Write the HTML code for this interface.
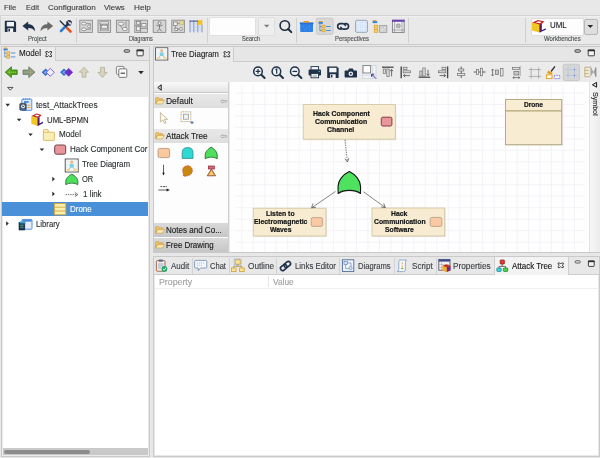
<!DOCTYPE html>
<html><head><meta charset="utf-8"><title>Modelio - Attack Tree</title>
<style>
html,body{margin:0;padding:0;}
body{width:600px;height:458px;background:#e8e8e8;position:relative;overflow:hidden;font-family:"Liberation Sans",sans-serif;font-size:8.4px;color:#2a2e30;}
.a{position:absolute;box-sizing:border-box;}
.t{position:absolute;white-space:nowrap;line-height:10px;transform-origin:0 0;-webkit-text-stroke:0.12px currentColor;}
svg{position:absolute;overflow:visible;left:0;top:0;}
</style></head><body><div id="root" style="position:absolute;left:0;top:0;width:600px;height:458px;will-change:transform;">

<div class="t" style="left:4.20px;top:2.69px;font-size:8.1px;color:#3a3d40;transform:scaleX(0.9432);">File</div>
<div class="t" style="left:25.50px;top:2.69px;font-size:8.1px;color:#3a3d40;transform:scaleX(0.9304);">Edit</div>
<div class="t" style="left:47.50px;top:2.69px;font-size:8.1px;color:#3a3d40;transform:scaleX(0.9918);">Configuration</div>
<div class="t" style="left:104.00px;top:2.69px;font-size:8.1px;color:#3a3d40;transform:scaleX(0.9690);">Views</div>
<div class="t" style="left:134.10px;top:2.69px;font-size:8.1px;color:#3a3d40;transform:scaleX(1.0093);">Help</div>
<div class="a" style="left:0;top:15px;width:600px;height:30px;border-top:1px solid #d4d4d4;border-bottom:1px solid #cbcbcb;background:#e9e9e9;"></div>
<div class="a" style="left:0;top:16px;width:600px;height:1px;background:#f0f0f0;"></div>
<div class="a" style="left:0;top:16px;width:1px;height:28px;background:#d4d4d4;"></div>
<div class="a" style="left:75.5px;top:18px;width:1px;height:25px;background:#d0d0d0;"></div>
<div class="a" style="left:206.5px;top:18px;width:1px;height:25px;background:#d0d0d0;"></div>
<div class="a" style="left:295.5px;top:18px;width:1px;height:25px;background:#d0d0d0;"></div>
<div class="a" style="left:408px;top:18px;width:1px;height:25px;background:#d0d0d0;"></div>
<div class="a" style="left:524.5px;top:18px;width:1px;height:25px;background:#d0d0d0;"></div>
<div class="t" style="left:28.00px;top:34.28px;font-size:6.4px;color:#4a4e50;transform:scaleX(0.9395);">Project</div>
<div class="t" style="left:129.00px;top:34.28px;font-size:6.4px;color:#4a4e50;transform:scaleX(0.8689);">Diagrams</div>
<div class="t" style="left:242.00px;top:34.28px;font-size:6.4px;color:#4a4e50;transform:scaleX(0.8872);">Search</div>
<div class="t" style="left:334.70px;top:34.28px;font-size:6.4px;color:#4a4e50;transform:scaleX(0.9279);">Perspectives</div>
<div class="t" style="left:544.00px;top:34.28px;font-size:6.4px;color:#4a4e50;transform:scaleX(0.9408);">Workbenches</div>
<div class="a" style="left:208.5px;top:17px;width:47.5px;height:18.5px;background:#fdfdfd;border:1px solid #e0e0e0;border-radius:2px;"></div>
<div class="a" style="left:257.5px;top:17px;width:17.5px;height:18.5px;background:#eeeeee;border:1px solid #dedede;border-radius:1px;"></div>
<div class="a" style="left:530.5px;top:17.5px;width:53px;height:18px;background:#fdfdfd;border:1px solid #dcdcdc;border-radius:2px;"></div>
<div class="a" style="left:583.5px;top:18.5px;width:14.5px;height:16px;background:#dedede;border:1px solid #b8b8b8;border-radius:2px;"></div>
<div class="t" style="left:550.00px;top:20.56px;font-size:8.2px;color:#1c1c1c;transform:scaleX(0.9652);">UML</div>
<div class="a" style="left:1px;top:45.5px;width:148.5px;height:411px;border:1px solid #c9c9c9;background:#ebebeb;"></div>
<div class="a" style="left:55px;top:46.5px;width:93.5px;height:14.5px;background:#e6e6e6;border-bottom:1px solid #cdcdcd;border-left:1px solid #cdcdcd;"></div>
<div class="t" style="left:18.70px;top:48.49px;font-size:8.4px;color:#1c1c1c;transform:scaleX(0.9611);">Model</div>
<div class="a" style="left:2.5px;top:97px;width:145px;height:351px;background:#ffffff;"></div>
<div class="a" style="left:2.5px;top:447.8px;width:145px;height:7.7px;background:#c9c9c9;"></div>
<div class="a" style="left:4px;top:449.8px;width:85.5px;height:4px;background:#8c8c8c;border-radius:2px;"></div>
<div class="a" style="left:2px;top:202px;width:145.5px;height:14.3px;background:#4a90d9;"></div>
<div class="t" style="left:35.60px;top:99.79px;font-size:8.4px;color:#2a2e30;transform:scaleX(0.9840);">test_AttackTrees</div>
<div class="t" style="left:47.00px;top:114.64px;font-size:8.4px;color:#2a2e30;transform:scaleX(0.9305);">UML-BPMN</div>
<div class="t" style="left:59.00px;top:129.49px;font-size:8.4px;color:#2a2e30;transform:scaleX(0.9611);">Model</div>
<div class="t" style="left:70.00px;top:144.34px;font-size:8.4px;color:#2a2e30;transform:scaleX(0.9608);">Hack Component Cor</div>
<div class="t" style="left:81.75px;top:159.19px;font-size:8.4px;color:#2a2e30;transform:scaleX(0.9455);">Tree Diagram</div>
<div class="t" style="left:81.75px;top:174.04px;font-size:8.4px;color:#2a2e30;transform:scaleX(0.8929);">OR</div>
<div class="t" style="left:82.50px;top:188.89px;font-size:8.4px;color:#2a2e30;transform:scaleX(0.9514);">1 link</div>
<div class="t" style="left:70.00px;top:203.74px;font-size:8.4px;color:#ffffff;transform:scaleX(0.9480);">Drone</div>
<div class="t" style="left:35.75px;top:218.59px;font-size:8.4px;color:#2a2e30;transform:scaleX(0.9255);">Library</div>
<div class="a" style="left:147.5px;top:140px;width:1px;height:16px;background:#ebebeb;"></div>
<div class="a" style="left:148.5px;top:140px;width:1px;height:16px;background:#c9c9c9;"></div>
<div class="a" style="left:149.5px;top:140px;width:3px;height:16px;background:#e8e8e8;"></div>
<div class="a" style="left:152.5px;top:45.5px;width:448px;height:207.5px;border:1px solid #c9c9c9;background:#ebebeb;"></div>
<div class="a" style="left:233px;top:46.5px;width:367px;height:15px;background:#e6e6e6;border-bottom:1px solid #cdcdcd;border-left:1px solid #cdcdcd;"></div>
<div class="t" style="left:170.80px;top:48.59px;font-size:8.4px;color:#1c1c1c;transform:scaleX(0.9406);">Tree Diagram</div>
<div class="a" style="left:154px;top:82px;width:75px;height:170px;background:#fdfdfd;border-right:1px solid #cfcfcf;"></div>
<div class="a" style="left:154px;top:82px;width:74px;height:10.5px;background:linear-gradient(#fafafa,#e4e4e4);border-bottom:1px solid #c8c8c8;"></div>
<div class="a" style="left:154px;top:93.5px;width:74px;height:14px;background:linear-gradient(#e8e8e8,#dedede);"></div>
<div class="a" style="left:154px;top:128.6px;width:74px;height:14px;background:linear-gradient(#e8e8e8,#dedede);"></div>
<div class="a" style="left:154px;top:223px;width:74px;height:14.2px;background:linear-gradient(#dadada,#c6c6c6);"></div>
<div class="a" style="left:154px;top:238px;width:74px;height:13.5px;background:linear-gradient(#dadada,#c6c6c6);"></div>
<div class="t" style="left:165.60px;top:95.94px;font-size:9.4px;color:#1c1c1c;transform:scaleX(0.9027);-webkit-text-stroke:0.15px #1c1c1c;">Default</div>
<div class="t" style="left:165.60px;top:130.74px;font-size:9.4px;color:#1c1c1c;transform:scaleX(0.8767);-webkit-text-stroke:0.15px #1c1c1c;">Attack Tree</div>
<div class="t" style="left:166.00px;top:224.74px;font-size:9.4px;color:#1c1c1c;transform:scaleX(0.8572);-webkit-text-stroke:0.15px #1c1c1c;">Notes and Co...</div>
<div class="t" style="left:166.00px;top:239.74px;font-size:9.4px;color:#1c1c1c;transform:scaleX(0.8457);-webkit-text-stroke:0.15px #1c1c1c;">Free Drawing</div>
<div class="a" style="left:229.5px;top:82px;width:359.5px;height:170px;background:#fefefe;"></div>
<div class="a" style="left:589px;top:82px;width:11px;height:170px;background:linear-gradient(90deg,#f6f6f6,#ececec);border-left:1px solid #e2e2e2;"></div>
<div class="t" style="left:600px;top:92.2px;font-size:8px;transform:rotate(90deg) scaleX(0.885);color:#222;">Symbol</div>
<div class="a" style="left:152.5px;top:256px;width:447px;height:200.5px;border:1px solid #c9c9c9;background:#e8e8e8;"></div>
<div class="a" style="left:153.5px;top:274px;width:445px;height:1px;background:#cdcdcd;"></div>
<div class="a" style="left:154.5px;top:275px;width:443.5px;height:180px;background:#ffffff;"></div>
<div class="a" style="left:493.5px;top:257px;width:75px;height:17.5px;background:#f3f3f3;border-left:1px solid #cdcdcd;border-right:1px solid #cdcdcd;"></div>
<div class="a" style="left:192px;top:258px;width:1px;height:15.5px;background:#d2d2d2;"></div>
<div class="a" style="left:228.7px;top:258px;width:1px;height:15.5px;background:#d2d2d2;"></div>
<div class="a" style="left:276px;top:258px;width:1px;height:15.5px;background:#d2d2d2;"></div>
<div class="a" style="left:339.3px;top:258px;width:1px;height:15.5px;background:#d2d2d2;"></div>
<div class="a" style="left:393.5px;top:258px;width:1px;height:15.5px;background:#d2d2d2;"></div>
<div class="a" style="left:435.5px;top:258px;width:1px;height:15.5px;background:#d2d2d2;"></div>
<div class="t" style="left:170.50px;top:260.79px;font-size:8.4px;color:#3a3d40;transform:scaleX(0.9503);">Audit</div>
<div class="t" style="left:210.00px;top:260.79px;font-size:8.4px;color:#3a3d40;transform:scaleX(0.9027);">Chat</div>
<div class="t" style="left:247.50px;top:260.79px;font-size:8.4px;color:#3a3d40;transform:scaleX(0.9839);">Outline</div>
<div class="t" style="left:294.80px;top:260.79px;font-size:8.4px;color:#3a3d40;transform:scaleX(0.9364);">Links Editor</div>
<div class="t" style="left:358.00px;top:260.79px;font-size:8.4px;color:#3a3d40;transform:scaleX(0.9123);">Diagrams</div>
<div class="t" style="left:412.00px;top:260.79px;font-size:8.4px;color:#3a3d40;transform:scaleX(0.9645);">Script</div>
<div class="t" style="left:453.20px;top:260.79px;font-size:8.4px;color:#3a3d40;transform:scaleX(0.9868);">Properties</div>
<div class="t" style="left:512.00px;top:260.79px;font-size:8.4px;color:#111;transform:scaleX(0.9505);">Attack Tree</div>
<div class="t" style="left:158.70px;top:276.59px;font-size:8.4px;color:#a0a0a0;transform:scaleX(1.0488);">Property</div>
<div class="t" style="left:273.00px;top:276.59px;font-size:8.4px;color:#a0a0a0;transform:scaleX(0.9917);">Value</div>
<div class="a" style="left:268px;top:276px;width:1px;height:11px;background:#e6e6e6;"></div>
<div class="a" style="left:154.5px;top:287.5px;width:444px;height:1px;background:#efefef;"></div>
<svg width="600" height="458" viewBox="0 0 600 458">
<path d="M241.80 85V251.5 M253.27 85V251.5 M264.74 85V251.5 M276.21 85V251.5 M287.68 85V251.5 M299.15 85V251.5 M310.62 85V251.5 M322.09 85V251.5 M333.56 85V251.5 M345.03 85V251.5 M356.50 85V251.5 M367.97 85V251.5 M379.44 85V251.5 M390.91 85V251.5 M402.38 85V251.5 M413.85 85V251.5 M425.32 85V251.5 M436.79 85V251.5 M448.26 85V251.5 M459.73 85V251.5 M471.20 85V251.5 M482.67 85V251.5 M494.14 85V251.5 M505.61 85V251.5 M517.08 85V251.5 M528.55 85V251.5 M540.02 85V251.5 M551.49 85V251.5 M562.96 85V251.5 M574.43 85V251.5 M235 93.00H584.5 M235 104.47H584.5 M235 115.94H584.5 M235 127.41H584.5 M235 138.88H584.5 M235 150.35H584.5 M235 161.82H584.5 M235 173.29H584.5 M235 184.76H584.5 M235 196.23H584.5 M235 207.70H584.5 M235 219.17H584.5 M235 230.64H584.5 M235 242.11H584.5" stroke="#f1eff5" stroke-width="0.8" fill="none"/>
<rect x="304.2" y="105.5" width="92.10000000000002" height="34.69999999999999" fill="#d9d9d9" opacity="0.6"/>
<rect x="303.2" y="104.5" width="92.10000000000002" height="34.69999999999999" fill="#f7ecd1" stroke="#cfc29a" stroke-width="0.8"/>
<rect x="254.2" y="209.2" width="72.80000000000001" height="27.80000000000001" fill="#d9d9d9" opacity="0.6"/>
<rect x="253.2" y="208.2" width="72.80000000000001" height="27.80000000000001" fill="#f7ecd1" stroke="#cfc29a" stroke-width="0.8"/>
<rect x="373" y="209" width="72.69999999999999" height="28" fill="#d9d9d9" opacity="0.6"/>
<rect x="372" y="208" width="72.69999999999999" height="28" fill="#f7ecd1" stroke="#cfc29a" stroke-width="0.8"/>
<rect x="506.4" y="100.3" width="56.3" height="45.2" fill="#cfcfcf" opacity="0.7"/>
<rect x="505.5" y="99.5" width="56.2" height="45.2" fill="#f8ecd2" stroke="#b0a478" stroke-width="0.9"/>
<path d="M505.5 110.8H561.7" stroke="#b0a478" stroke-width="1.2"/>
<rect x="381.3" y="117.2" width="10.6" height="8.8" rx="1.5" fill="#e8959b" stroke="#8c3748" stroke-width="1"/>
<rect x="311.2" y="217.6" width="11.2" height="8.8" rx="1.5" fill="#f8c9a2" stroke="#b59a86" stroke-width="0.8"/>
<rect x="430.2" y="217.4" width="11.6" height="9" rx="1.5" fill="#f8c9a2" stroke="#b59a86" stroke-width="0.8"/>
<path d="M345 139.8L347.4 162" stroke="#444" stroke-width="0.7" stroke-dasharray="1.4 1" fill="none"/>
<path d="M345 158.6L347.4 162L348.9 158.2" stroke="#444" stroke-width="0.7" fill="none"/>
<path d="M335.5 191.5L311.6 207.8" stroke="#555" stroke-width="0.7" fill="none"/>
<path d="M313 203.5L311.6 207.8L316 207.3" stroke="#444" stroke-width="0.7" fill="none"/>
<path d="M363.5 191.8L385.3 207.5" stroke="#555" stroke-width="0.7" fill="none"/>
<path d="M381 207L385.3 207.5L383.7 203.4" stroke="#444" stroke-width="0.7" fill="none"/>
<path d="M349.3 171.5C355.5 174.5 360.6 180.5 360.6 186.8L360.5 193.5C355 189.4 343.6 189.4 338.2 193.5L338 186.8C338 180.5 343 174.5 349.3 171.5Z" fill="#4fe25e" stroke="#141414" stroke-width="1.1" stroke-linejoin="round"/>
</svg>
<div class="t" style="left:312.60px;top:108.77px;font-size:7px;color:#141414;font-weight:bold;transform:scaleX(0.9865);-webkit-text-stroke:0.2px #141414;">Hack Component</div>
<div class="t" style="left:314.91px;top:116.77px;font-size:7px;color:#141414;font-weight:bold;transform:scaleX(0.9865);-webkit-text-stroke:0.2px #141414;">Communication</div>
<div class="t" style="left:327.38px;top:124.77px;font-size:7px;color:#141414;font-weight:bold;transform:scaleX(0.9865);-webkit-text-stroke:0.2px #141414;">Channel</div>
<div class="t" style="left:266.41px;top:209.17px;font-size:7px;color:#141414;font-weight:bold;transform:scaleX(0.9805);-webkit-text-stroke:0.2px #141414;">Listen to</div>
<div class="t" style="left:254.00px;top:217.17px;font-size:7px;color:#141414;font-weight:bold;transform:scaleX(0.9805);-webkit-text-stroke:0.2px #141414;">Electromagnetic</div>
<div class="t" style="left:269.96px;top:225.17px;font-size:7px;color:#141414;font-weight:bold;transform:scaleX(0.9805);-webkit-text-stroke:0.2px #141414;">Waves</div>
<div class="t" style="left:391.42px;top:208.97px;font-size:7px;color:#141414;font-weight:bold;transform:scaleX(0.9757);-webkit-text-stroke:0.2px #141414;">Hack</div>
<div class="t" style="left:373.80px;top:216.97px;font-size:7px;color:#141414;font-weight:bold;transform:scaleX(0.9757);-webkit-text-stroke:0.2px #141414;">Communication</div>
<div class="t" style="left:385.17px;top:224.97px;font-size:7px;color:#141414;font-weight:bold;transform:scaleX(0.9757);-webkit-text-stroke:0.2px #141414;">Software</div>
<div class="t" style="left:524.00px;top:99.87px;font-size:7px;color:#141414;font-weight:bold;transform:scaleX(0.9392);-webkit-text-stroke:0.2px #141414;">Drone</div>
<svg width="600" height="458" viewBox="0 0 600 458">
<g transform="translate(3.2,47.2) scale(0.98)"><path d="M0.3 1.2Q0.3 0.3 1.3 0.3H3.6Q4.4 0.3 4.4 1.2V1.6H0.3Z" fill="#f0a020"/><rect x="0.3" y="1.5" width="4.3" height="1.7" fill="#2f7fe0"/><path d="M1.6 3.2V9.9M1.6 6H3.6M1.6 9.9H3.6" stroke="#3a78c8" stroke-width="0.7" fill="none"/><rect x="3.7" y="4.6" width="3" height="2.7" fill="#f6d060" stroke="#d89a20" stroke-width="0.6"/><rect x="3.7" y="8.5" width="3" height="2.7" fill="#f6d060" stroke="#d89a20" stroke-width="0.6"/><path d="M7.8 5.9H12.4M7.8 9.9H12.4" stroke="#3a88e0" stroke-width="0.9"/></g>
<g transform="translate(45.5,51.2)" fill="#efefef" stroke="#262626" stroke-width="0.9"><path d="M0.4 0.4H2.2L3.2 1.5L4.2 0.4H6V1.9L4.7 2.9L6 3.9V5.4H4.2L3.2 4.3L2.2 5.4H0.4V3.9L1.7 2.9L0.4 1.9Z"/></g>
<rect x="124.2" y="49.8" width="5.4" height="2.4" rx="0.9" fill="#cfcfcf" stroke="#333" stroke-width="0.9"/>
<rect x="137" y="50.0" width="6.2" height="5.8" rx="0.6" fill="#f4f4f4" stroke="#2e2e2e" stroke-width="0.9"/>
<rect x="136.6" y="49.599999999999994" width="7" height="1.7" fill="#2e2e2e"/>
<path d="M5.2 72.2L11.4 66.8V70H17.2V74.4H11.4V77.6Z" fill="#52a51e" stroke="#2f7a12" stroke-width="0.8" stroke-linejoin="round"/>
<path d="M7.6 72.2H16M9.6 70.2V74.2" stroke="#d9d23a" stroke-width="0.7" stroke-dasharray="1.2 0.6"/>
<path d="M35 72.2L28.8 66.8V70H23V74.4H28.8V77.6Z" fill="#8d9a84" stroke="#6c7766" stroke-width="0.8" stroke-linejoin="round"/>
<path d="M24.4 72.2H32.6M30.8 70.2V74.2" stroke="#b5b77e" stroke-width="0.7" stroke-dasharray="1.2 0.6"/>
<path d="M41.7 72.3L45.6 68.5L49.5 72.3L45.6 76.1Z" fill="#2f6fd6"/>
<path d="M43.900000000000006 72.3L45.900000000000006 70.4L47.900000000000006 72.3L45.900000000000006 74.2Z" fill="#7fa8ec"/>
<path d="M50.300000000000004 68.4L54.300000000000004 72.3L50.300000000000004 76.3L46.300000000000004 72.3Z" fill="#eef0fa" stroke="#7a3cc8" stroke-width="0.8"/>
<path d="M60.1 72.3L64.0 68.5L67.9 72.3L64.0 76.1Z" fill="#2f6fd6"/>
<path d="M62.300000000000004 72.3L64.3 70.4L66.3 72.3L64.3 74.2Z" fill="#7fa8ec"/>
<path d="M68.7 68.4L72.7 72.3L68.7 76.3L64.7 72.3Z" fill="#6a2fc4" stroke="#7a3cc8" stroke-width="0.8"/>
<path d="M84 67.2L88.6 72.2H86V77.2H82V72.2H79.4Z" fill="#d9d3bf" stroke="#b5ad94" stroke-width="0.8" stroke-linejoin="round"/>
<path d="M102.5 77.4L107.1 72.4H104.5V67.4H100.5V72.4H97.9Z" fill="#d9d3bf" stroke="#b5ad94" stroke-width="0.8" stroke-linejoin="round"/>
<rect x="116.4" y="66.4" width="7.6" height="8" rx="1" fill="#f6f6f6" stroke="#6c6c6c" stroke-width="0.8"/>
<rect x="118.8" y="68.8" width="8" height="8.6" rx="1" fill="#fafafa" stroke="#5a5a5a" stroke-width="0.8"/>
<path d="M120.6 73.2H125" stroke="#3a3a3a" stroke-width="1.1"/>
<path d="M138.2 71H143.8L141 74.2Z" fill="#2c2c2c"/>
<path d="M7.6 87.4H13L10.3 90.2Z" fill="#f0f0f0" stroke="#2c2c2c" stroke-width="0.8" stroke-linejoin="round"/>
<path d="M5.4 103.8H10.0L7.7 106.39999999999999Z" fill="#2c2c2c"/>
<path d="M16.8 118.7H21.4L19.1 121.3Z" fill="#2c2c2c"/>
<path d="M28.2 133.5H32.8L30.5 136.1Z" fill="#2c2c2c"/>
<path d="M39.6 148.4H44.2L41.9 151.0Z" fill="#2c2c2c"/>
<path d="M52.3 176.8V181.4L54.9 179.10000000000002Z" fill="#2c2c2c"/>
<path d="M52.3 191.6V196.2L54.9 193.9Z" fill="#2c2c2c"/>
<path d="M6.2 221.2V225.79999999999998L8.8 223.5Z" fill="#2c2c2c"/>
<rect x="21.8" y="99" width="10" height="11.4" rx="0.8" fill="#dbe9fb" stroke="#4a8ae0" stroke-width="0.9"/>
<path d="M23.4 98.2V100M25.4 98.2V100M27.4 98.2V100M29.4 98.2V100" stroke="#4a8ae0" stroke-width="0.8"/>
<rect x="24" y="101.2" width="4.6" height="1.6" fill="#2f7fe0"/>
<path d="M27.4 105.2H30.4M27.4 107.6H30.4" stroke="#f0a030" stroke-width="1"/>
<rect x="19.8" y="103.4" width="6.4" height="6.8" rx="0.8" fill="#4a5a70" stroke="#2c3a4c" stroke-width="0.7"/>
<circle cx="23" cy="106.4" r="1.9" fill="#e8eef4"/><path d="M22.4 105.3V107.5L24.2 106.4Z" fill="#2c3c50"/>
<path d="M20.6 109.4H25.4" stroke="#3a7ad0" stroke-width="0.8"/>
<g transform="translate(31.3,113.4) scale(0.84,1.0)"><path d="M0 2.6L7.6 4.2V12.6L0 10.4Z" fill="#f2c81e"/><path d="M0.2 2.6L6 0L12.4 1.6L9.4 4.2L7.6 4.4Z" fill="#c8201c"/><path d="M3.6 2.4L6.4 1.2L9.6 2L8 3.2Z" fill="#fdfdfd"/><path d="M7.6 4.4L9.8 3.8V10.2L13.8 8.2V9.8L7.6 12.6Z" fill="#2a1a9a"/><path d="M7.6 4.4L8.6 4.1V12.1L7.6 12.6Z" fill="#7a1a3a"/></g>
<path d="M43.4 130.2Q43.4 129.6 44 129.6H47.6Q48.2 129.6 48.2 130.2V132.2H53.8Q54.4 132.2 54.4 132.8V139.8Q54.4 140.4 53.8 140.4H44Q43.4 140.4 43.4 139.8Z" fill="#fbeeb4" stroke="#d2ad50" stroke-width="0.8"/>
<path d="M43.4 132.4H48.2" stroke="#d2ad50" stroke-width="0.6"/>
<rect x="54.7" y="145" width="11" height="9.2" rx="1.8" fill="#e8969b" stroke="#6e4248" stroke-width="1"/>
<g transform="translate(64.8,158.6) scale(1.0147058823529413)"><rect x="0.4" y="0.4" width="12.8" height="12.8" fill="#fbfbfb" stroke="#4a4a4a" stroke-width="0.9"/><rect x="1.2" y="1.2" width="11.2" height="11.2" fill="#eef3f8"/><circle cx="6.8" cy="3.4" r="1.5" fill="#f0b070"/><path d="M4.8 5.2H8.8V9H4.8Z" fill="#7fd0e0"/><path d="M5.4 9L3.6 10.6M8.2 9L10 10.6" stroke="#b0a080" stroke-width="0.7"/><rect x="1.8" y="10" width="3.4" height="2.2" fill="#f6d890"/><rect x="8.4" y="10" width="3.4" height="2.2" fill="#f6d890"/></g>
<path d="M71.8 174.2C75.04 175.66 77.8 178.46 77.8 181.38L77.8 184.6C74.80 182.62 68.80 182.62 65.8 184.6L65.8 181.38C65.8 178.46 68.56 175.66 71.8 174.2Z" fill="#4fdf5f" stroke="#2a6a30" stroke-width="0.9" stroke-linejoin="round"/>
<path d="M65.6 194.6H76.6" stroke="#4a4a4a" stroke-width="0.8" stroke-dasharray="1.4 0.9"/>
<path d="M74.8 192.5L77.8 194.6L74.8 196.7" stroke="#4a4a4a" stroke-width="0.8" fill="none"/>
<rect x="54.4" y="203.6" width="11.4" height="11.2" fill="#fbefb0" stroke="#d4a838" stroke-width="0.9"/>
<path d="M54.4 207.2H65.8M54.4 211H65.8" stroke="#d4a838" stroke-width="0.9"/>
<rect x="22" y="219.4" width="10" height="9.8" rx="0.8" fill="#e6effb" stroke="#4a84d0" stroke-width="0.9"/>
<rect x="22.4" y="219.8" width="9.2" height="1.8" fill="#3f86e0"/>
<rect x="19" y="222.6" width="5.8" height="7.4" fill="#1c3a5c" stroke="#0e2238" stroke-width="0.6"/>
<rect x="20" y="221.4" width="5.6" height="2" fill="#3fa0c8"/>
<path d="M20.2 225.2H23.6M20.2 227.2H23.6" stroke="#5fd08a" stroke-width="0.7"/>
<g transform="translate(155.2,47.4) scale(0.9558823529411765)"><rect x="0.4" y="0.4" width="12.8" height="12.8" fill="#fbfbfb" stroke="#4a4a4a" stroke-width="0.9"/><rect x="1.2" y="1.2" width="11.2" height="11.2" fill="#eef3f8"/><circle cx="6.8" cy="3.4" r="1.5" fill="#f0b070"/><path d="M4.8 5.2H8.8V9H4.8Z" fill="#7fd0e0"/><path d="M5.4 9L3.6 10.6M8.2 9L10 10.6" stroke="#b0a080" stroke-width="0.7"/><rect x="1.8" y="10" width="3.4" height="2.2" fill="#f6d890"/><rect x="8.4" y="10" width="3.4" height="2.2" fill="#f6d890"/></g>
<g transform="translate(223.6,51.4)" fill="#efefef" stroke="#262626" stroke-width="0.9"><path d="M0.4 0.4H2.2L3.2 1.5L4.2 0.4H6V1.9L4.7 2.9L6 3.9V5.4H4.2L3.2 4.3L2.2 5.4H0.4V3.9L1.7 2.9L0.4 1.9Z"/></g>
<rect x="575" y="49.8" width="5.4" height="2.4" rx="0.9" fill="#cfcfcf" stroke="#333" stroke-width="0.9"/>
<rect x="588.2" y="50.0" width="6.2" height="5.8" rx="0.6" fill="#f4f4f4" stroke="#2e2e2e" stroke-width="0.9"/>
<rect x="587.8000000000001" y="49.599999999999994" width="7" height="1.7" fill="#2e2e2e"/>
</svg>
<svg width="600" height="458" viewBox="0 0 600 458">
<circle cx="258" cy="71.4" r="4.3" fill="#f2f2f2" stroke="#1f3249" stroke-width="1.5"/>
<path d="M261.3 74.7L264.6 78.0" stroke="#1f3249" stroke-width="2" stroke-linecap="round"/>
<path d="M255.7 71.4H260.3M258 69.10000000000001V73.7" stroke="#1f3249" stroke-width="1.2"/>
<circle cx="276.4" cy="71.4" r="4.3" fill="#f2f2f2" stroke="#1f3249" stroke-width="1.5"/>
<path d="M279.7 74.7L283.0 78.0" stroke="#1f3249" stroke-width="2" stroke-linecap="round"/>
<path d="M275.5 69.80000000000001L276.7 69.0V73.80000000000001" stroke="#1f3249" stroke-width="1.2" fill="none"/>
<circle cx="294.8" cy="71.4" r="4.3" fill="#f2f2f2" stroke="#1f3249" stroke-width="1.5"/>
<path d="M298.1 74.7L301.40000000000003 78.0" stroke="#1f3249" stroke-width="2" stroke-linecap="round"/>
<path d="M292.5 71.4H297.1" stroke="#1f3249" stroke-width="1.3"/>
<rect x="311" y="66.6" width="7.6" height="3.6" fill="#f6f6f6" stroke="#1f3249" stroke-width="0.9"/>
<rect x="308.6" y="69.6" width="12.4" height="6" rx="1" fill="#1f3249"/>
<rect x="311" y="73.6" width="7.6" height="4.2" fill="#f6f6f6" stroke="#1f3249" stroke-width="0.9"/>
<path d="M312.6 75.4H317M312.6 76.6H317" stroke="#8a8a8a" stroke-width="0.5"/>
<circle cx="319.2" cy="71.4" r="0.6" fill="#5fd0c0"/>
<g transform="translate(327.2,66.5) scale(1.01,1.02)"><path d="M0.6 0H9.6L11.3 1.6V10.7Q11.3 11.3 10.7 11.3H0.6Q0 11.3 0 10.7V0.6Q0 0 0.6 0Z" fill="#1f3249"/><rect x="2" y="1.3" width="7.2" height="4.4" fill="#f4f4f4"/><rect x="2.8" y="7.6" width="5.6" height="3.7" fill="#f4f4f4"/><rect x="3.6" y="8.2" width="1.6" height="2.6" fill="#1f3249"/></g>
<path d="M345.4 70.4H348L349 68.6H352.8L353.8 70.4H356.2Q357 70.4 357 71.2V76.8Q357 77.6 356.2 77.6H345.4Q344.6 77.6 344.6 76.8V71.2Q344.6 70.4 345.4 70.4Z" fill="#1f3249"/>
<circle cx="350.8" cy="73.8" r="2.3" fill="#f2f2f2"/>
<circle cx="350.8" cy="73.8" r="1" fill="#1f3249"/>
<rect x="362.6" y="65.4" width="13.4" height="13.2" fill="#f2f2f2" stroke="#c4ccd8" stroke-width="0.6"/>
<path d="M362.6 75.4H376M372.4 65.4V78.6" stroke="#c0d0e8" stroke-width="0.6"/>
<rect x="363" y="65.6" width="7.6" height="7.4" fill="#fdfdfd" stroke="#7c7c7c" stroke-width="0.9"/>
<path d="M376 78.6L372 74.6M371.6 76.8V74.2H374.2" stroke="#4a2a9a" stroke-width="1" fill="none"/>
<path d="M382 67.2H393.6" stroke="#4a4a4a" stroke-width="1.3" fill="none"/>
<rect x="383.2" y="69" width="2.4" height="4.4" fill="#dedede" stroke="#6e6e6e" stroke-width="0.7"/>
<rect x="386.8" y="69" width="2.4" height="7.4" fill="#dedede" stroke="#6e6e6e" stroke-width="0.7"/>
<path d="M391.6 76.4V69.6M390.2 71.2L391.6 69.4L393 71.2" stroke="#4a4a4a" stroke-width="0.8" fill="none"/>
<path d="M401.2 66.4V78.2" stroke="#4a4a4a" stroke-width="1.4" fill="none"/>
<rect x="403.2" y="67.2" width="3.8" height="2.4" fill="#dedede" stroke="#6e6e6e" stroke-width="0.7"/>
<rect x="403.2" y="70.8" width="7.2" height="2.0" fill="#dedede" stroke="#6e6e6e" stroke-width="0.7"/>
<path d="M410 75.6H403.6M405.2 74.2L403.4 75.6L405.2 77" stroke="#4a4a4a" stroke-width="0.8" fill="none"/>
<path d="M418.6 77.2H430.2" stroke="#4a4a4a" stroke-width="1.3" fill="none"/>
<rect x="419.8" y="71" width="2.2" height="5.0" fill="#dedede" stroke="#6e6e6e" stroke-width="0.7"/>
<rect x="422.8" y="68" width="2.4" height="8.0" fill="#dedede" stroke="#6e6e6e" stroke-width="0.7"/>
<path d="M428 69.8V75.4M426.6 73.8L428 75.6L429.4 73.8" stroke="#4a4a4a" stroke-width="0.8" fill="none"/>
<path d="M447.6 66.4V78.2" stroke="#4a4a4a" stroke-width="1.4" fill="none"/>
<rect x="442" y="67.2" width="3.8" height="2.4" fill="#dedede" stroke="#6e6e6e" stroke-width="0.7"/>
<rect x="438.6" y="70.8" width="7.2" height="2.0" fill="#dedede" stroke="#6e6e6e" stroke-width="0.7"/>
<path d="M439.6 75.6H445.4M443.8 74.2L445.6 75.6L443.8 77" stroke="#4a4a4a" stroke-width="0.8" fill="none"/>
<path d="M461.2 66.6V78" stroke="#4a4a4a" stroke-width="0.9" fill="none"/>
<rect x="458.6" y="69" width="5.2" height="2.0" fill="#e8e8e8" stroke="#6e6e6e" stroke-width="0.7"/>
<rect x="457.6" y="73.4" width="7.2" height="2.0" fill="#e8e8e8" stroke="#6e6e6e" stroke-width="0.7"/>
<path d="M473.8 72H485.6" stroke="#4a4a4a" stroke-width="0.9" fill="none"/>
<rect x="476.4" y="69.6" width="2.2" height="4.8" fill="#e8e8e8" stroke="#6e6e6e" stroke-width="0.7"/>
<rect x="480.4" y="68.2" width="2.2" height="7.6" fill="#e8e8e8" stroke="#6e6e6e" stroke-width="0.7"/>
<path d="M492.6 69.4V75.6M491.6 70.4L492.6 69L493.6 70.4M491.6 74.6L492.6 76L493.6 74.6" stroke="#4a4a4a" stroke-width="0.7" fill="none"/>
<rect x="495.6" y="70" width="3.0" height="4.4" fill="#c8c8c8" stroke="#6e6e6e" stroke-width="0.7"/>
<rect x="500.6" y="68.6" width="2.4" height="7.4" fill="#e8e8e8" stroke="#6e6e6e" stroke-width="0.7"/>
<rect x="512.6" y="67.6" width="7.0" height="2.0" fill="#e8e8e8" stroke="#6e6e6e" stroke-width="0.7"/>
<rect x="514" y="71.6" width="4.8" height="3.4" fill="#c8c8c8" stroke="#6e6e6e" stroke-width="0.7"/>
<path d="M520.2 66.2V76" stroke="#8a8a8a" stroke-width="0.7" fill="none"/>
<path d="M513.2 77.6H519.4M514.2 76.6L512.8 77.6L514.2 78.6M518.4 76.6L519.8 77.6L518.4 78.6" stroke="#4a4a4a" stroke-width="0.7" fill="none"/>
<path d="M531.2 67.4V78.6M538.6 67.4V78.6M528.8 69.6H541.2M528.8 76.4H541.2" stroke="#9a9a9a" stroke-width="0.7" fill="none"/>
<path d="M554.6 66.8L551.4 71" stroke="#2a2a2a" stroke-width="1.3" stroke-linecap="round"/>
<path d="M548.4 70.6L552.6 72.8L551.4 74.8L546.8 73Z" fill="#e8a020"/>
<rect x="546.4" y="74.8" width="5.6" height="3.8" fill="#fdf6e0" stroke="#e0a020" stroke-width="0.9"/>
<rect x="554.2" y="75.4" width="5.6" height="3.2" fill="#f6f6ff" stroke="#5a4ac8" stroke-width="0.7" stroke-dasharray="1 0.6"/>
<rect x="563.2" y="64.2" width="16.4" height="16.4" rx="1.6" fill="#d6d6d6" stroke="#c2c2c2" stroke-width="0.8"/>
<path d="M568 66V79M574.4 66V79M565 69.6H578M565 75.4H578" stroke="#b4c4e0" stroke-width="0.7" fill="none"/>
<g fill="#4a6ad8"><circle cx="574.4" cy="69.6" r="0.6"/><circle cx="574.4" cy="75.4" r="0.6"/><circle cx="568" cy="75.4" r="0.5" fill="#7d9ae0"/></g>
<path d="M590 67.2H584.8V76.8H590Z" fill="#efe8d4"/>
<path d="M590.2 67.2H584.8V76.8H590.2M584.8 70.4H588.6M584.8 73.6H588.6" stroke="#c4ae74" stroke-width="0.9" fill="none"/>
<path d="M590.4 65.6L593.2 71.8L596.2 67V77L593.2 72.2L590.4 77Z" fill="#a8a8a8"/>
<path d="M595.8 67.4V77" stroke="#7e7e7e" stroke-width="0.8" fill="none"/>
<path d="M161.2 84.8V90.2L157.8 87.5Z" fill="#e0e0e0" stroke="#1c1c1c" stroke-width="1" stroke-linejoin="round"/>
<path d="M155.6 98.6Q155.6 97.6 156.4 97.6H158.6L159.6 98.6H162.2Q162.79999999999998 98.6 162.79999999999998 99.39999999999999V100.19999999999999H157.6L155.6 103.8Z" fill="#eec468" stroke="#c89a40" stroke-width="0.6"/>
<path d="M157.79999999999998 100.39999999999999H164.4L162.4 104.0H155.79999999999998Z" fill="#fbeab0" stroke="#c89a40" stroke-width="0.6" stroke-linejoin="round"/>
<path d="M155.6 133.6Q155.6 132.6 156.4 132.6H158.6L159.6 133.6H162.2Q162.79999999999998 133.6 162.79999999999998 134.4V135.2H157.6L155.6 138.79999999999998Z" fill="#eec468" stroke="#c89a40" stroke-width="0.6"/>
<path d="M157.79999999999998 135.4H164.4L162.4 139.0H155.79999999999998Z" fill="#fbeab0" stroke="#c89a40" stroke-width="0.6" stroke-linejoin="round"/>
<path d="M155.6 227.8Q155.6 226.8 156.4 226.8H158.6L159.6 227.8H162.2Q162.79999999999998 227.8 162.79999999999998 228.60000000000002V229.4H157.6L155.6 233.0Z" fill="#eec468" stroke="#c89a40" stroke-width="0.6"/>
<path d="M157.79999999999998 229.60000000000002H164.4L162.4 233.20000000000002H155.79999999999998Z" fill="#fbeab0" stroke="#c89a40" stroke-width="0.6" stroke-linejoin="round"/>
<path d="M155.6 242.6Q155.6 241.6 156.4 241.6H158.6L159.6 242.6H162.2Q162.79999999999998 242.6 162.79999999999998 243.4V244.2H157.6L155.6 247.79999999999998Z" fill="#eec468" stroke="#c89a40" stroke-width="0.6"/>
<path d="M157.79999999999998 244.4H164.4L162.4 248.0H155.79999999999998Z" fill="#fbeab0" stroke="#c89a40" stroke-width="0.6" stroke-linejoin="round"/>
<path d="M220.6 101.3L222.6 99.6V100.6H226.2Q227.0 100.6 227.0 101.3Q227.0 102.0 226.2 102.0H222.6V103.0Z" fill="#f6f6f6" stroke="#8a8a8a" stroke-width="0.6" stroke-linejoin="round"/>
<path d="M220.6 136.29999999999998L222.6 134.6V135.6H226.2Q227.0 135.6 227.0 136.29999999999998Q227.0 137.0 226.2 137.0H222.6V138.0Z" fill="#f6f6f6" stroke="#8a8a8a" stroke-width="0.6" stroke-linejoin="round"/>
<path d="M160.4 112.6V122L162.8 120L164.6 123.4L166 122.8L164.4 119.4H167.6Z" fill="#fbf8f0" stroke="#c4b496" stroke-width="0.9" stroke-linejoin="round"/>
<rect x="181" y="111.8" width="9.8" height="9.8" fill="none" stroke="#e8b050" stroke-width="0.8" stroke-dasharray="1.6 1.8"/>
<rect x="181" y="111.8" width="9.8" height="9.8" fill="none" stroke="#5a94dc" stroke-width="0.8" stroke-dasharray="1 2.4" stroke-dashoffset="-2"/>
<rect x="183.4" y="114.2" width="5" height="5" fill="#f2f2f2" stroke="#9a9a9a" stroke-width="0.8"/>
<path d="M190.4 122.6H193.6M192 121V124.2" stroke="#3a5a8a" stroke-width="0.8"/>
<rect x="158" y="148.4" width="11.6" height="9.2" rx="1.6" fill="#f9c99d" stroke="#b0907a" stroke-width="0.8"/>
<path d="M182.2 158.4V152.6Q182.2 147.6 187.6 147.6Q193 147.6 193 152.6V158.4Z" fill="#2fd9d2" stroke="#2a8a90" stroke-width="0.8" stroke-linejoin="round"/>
<path d="M211.2 147.2C214.44 148.82 217.2 151.96 217.2 155.20L217.2 158.79999999999998C214.20 156.60 208.20 156.60 205.2 158.79999999999998L205.2 155.20C205.2 151.96 207.96 148.82 211.2 147.2Z" fill="#4fdf5f" stroke="#2a6a30" stroke-width="0.9" stroke-linejoin="round"/>
<path d="M163.5 164.8V174.4" stroke="#1a1a1a" stroke-width="0.7"/><path d="M162.2 172.8L163.5 175.4L164.8 172.8Z" fill="#1a1a1a"/>
<path d="M187.6 165.8C190.6 165.8 192.4 168 192.4 170.6C192.4 174.2 189 176.2 185 176.2C183.6 176.2 183 175.8 183.4 175C183.8 174.2 182.6 172.6 182.6 170.6C182.6 167.8 184.8 165.8 187.6 165.8Z" fill="#c8880e" stroke="#d8402a" stroke-width="0.7" stroke-dasharray="1.6 0.8"/>
<rect x="208.4" y="166" width="6" height="3" fill="#e0606a" stroke="#8a2a3a" stroke-width="0.7"/>
<path d="M211.4 169L215.6 175.8H207.2Z" fill="#f0b050" stroke="#7a2a2a" stroke-width="0.7" stroke-linejoin="round"/>
<path d="M211.4 171.4L213.2 174.8H209.6Z" fill="#f8e060"/>
<path d="M158.4 190H167.4" stroke="#1a1a1a" stroke-width="0.7"/><path d="M166.6 188.6L169.8 190L166.6 191.4Z" fill="#1a1a1a"/>
<path d="M160.4 186.6H162.2M163 186.6H165.4M166.2 186.6H167" stroke="#3a3a3a" stroke-width="0.9"/>
<path d="M596.6 82.4V87.2L592.4 84.8Z" fill="#e0e0e0" stroke="#1c1c1c" stroke-width="1" stroke-linejoin="round"/>
<rect x="156.4" y="260.6" width="8.6" height="10.6" rx="0.8" fill="#f4f0ea" stroke="#a05a3a" stroke-width="0.9"/>
<rect x="158.6" y="259.4" width="4.2" height="2.4" rx="0.6" fill="#5a6a8a"/>
<path d="M158 264H163.4M158 266H163.4M158 268H161" stroke="#6a8ac8" stroke-width="0.7"/>
<circle cx="164.4" cy="269" r="2.9" fill="#2aa86a"/><path d="M163 269L164.1 270.2L166 267.8" stroke="#fff" stroke-width="0.8" fill="none"/>
<path d="M195.6 260.4H205.8Q206.8 260.4 206.8 261.4V267Q206.8 268 205.8 268H200.4L198.2 270.8V268H195.6Q194.6 268 194.6 267V261.4Q194.6 260.4 195.6 260.4Z" fill="#f4f8fc" stroke="#7a94b4" stroke-width="0.9" stroke-linejoin="round"/>
<path d="M196.8 263H204.6M196.8 265.2H202.6" stroke="#9ab4d4" stroke-width="0.7" stroke-dasharray="1.4 0.6"/>
<rect x="235.2" y="259.8" width="5" height="4.4" fill="#f8e49a" stroke="#d8a030" stroke-width="0.8"/>
<rect x="234.2" y="258.8" width="7" height="6.4" fill="none" stroke="#5a90d8" stroke-width="0.6" stroke-dasharray="1.2 1"/>
<path d="M237.7 264.2V266.4M233.4 268V266.4H242V268" stroke="#c89030" stroke-width="0.8" fill="none"/>
<rect x="231.4" y="268" width="4.6" height="3.6" fill="#f8e49a" stroke="#d8a030" stroke-width="0.8"/>
<rect x="239.6" y="268" width="4.6" height="3.6" fill="#f8e49a" stroke="#d8a030" stroke-width="0.8"/>
<g transform="rotate(-40 285.5 266)" fill="none" stroke="#1f3249" stroke-width="1.6"><rect x="279.6" y="263.8" width="7" height="4.4" rx="2.2"/><rect x="284.4" y="263.8" width="7" height="4.4" rx="2.2"/></g>
<rect x="342.4" y="259.8" width="11.4" height="11.6" fill="#f0f5fb" stroke="#4a6a9a" stroke-width="0.9"/>
<rect x="344" y="261.6" width="3.4" height="3" fill="#d8e6f8" stroke="#5a7ab0" stroke-width="0.6"/>
<circle cx="350.6" cy="268" r="1.6" fill="#d8e6f8" stroke="#5a7ab0" stroke-width="0.6"/>
<path d="M345.6 264.6V268.6H349M347.4 263H351V266.4" stroke="#5a7ab0" stroke-width="0.6" fill="none"/>
<path d="M399.6 260H406.6Q405.4 261 405.4 262.4V269.6Q405.4 271.6 403.4 271.6H397Q398.8 270.8 398.8 269.4V261.4Q398.8 260 399.6 260Z" fill="#f6f9fd" stroke="#7a9ac8" stroke-width="0.8" stroke-linejoin="round"/>
<path d="M402.2 262.4V264.4M402.2 265.4V267.6" stroke="#d8a020" stroke-width="0.9"/><path d="M401 268.6H403.6" stroke="#4a9a3a" stroke-width="0.8"/>
<rect x="438.8" y="259.4" width="11.2" height="10.8" fill="#f4f4f8" stroke="#5a5a70" stroke-width="0.9"/>
<rect x="438.8" y="259.4" width="11.2" height="2.2" fill="#3a4a8a"/>
<path d="M441.6 261.6V270.2M438.8 264.6H450M438.8 267.4H450" stroke="#9a9ab0" stroke-width="0.5"/>
<path d="M442.6 265.8L446.4 264.4L450.4 265.8V270.6L446.6 272L442.6 270.6Z" fill="#e89a20"/>
<path d="M446.6 267.2L450.4 265.8V270.6L446.6 272Z" fill="#6a2a9a"/>
<path d="M442.6 265.8L446.6 267.2V272L442.6 270.6Z" fill="#f0b030"/>
<path d="M442.6 265.8L446.4 264.4L450.4 265.8L446.6 267.2Z" fill="#c8281c"/>
<path d="M502.2 264V266.4M499 268.4V266.4H505.6V268.4" stroke="#3a3a3a" stroke-width="0.7" fill="none"/>
<rect x="500.2" y="260" width="4.2" height="4" rx="0.6" fill="#e83a30" stroke="#8a1a1a" stroke-width="0.7"/>
<rect x="496.8" y="268" width="4.4" height="3.4" rx="0.6" fill="#3ad8d8" stroke="#1a7a8a" stroke-width="0.7"/>
<rect x="503.4" y="268" width="4.4" height="3.4" rx="0.6" fill="#4ad84a" stroke="#1a7a2a" stroke-width="0.7"/>
<g transform="translate(557.8,262.6) scale(0.92)" fill="#f6f6f6" stroke="#262626" stroke-width="0.9"><path d="M0.4 0.4H2.2L3.2 1.5L4.2 0.4H6V1.9L4.7 2.9L6 3.9V5.4H4.2L3.2 4.3L2.2 5.4H0.4V3.9L1.7 2.9L0.4 1.9Z"/></g>
<rect x="575.2" y="260.8" width="5" height="2.2" rx="0.8" fill="#f4f4f4" stroke="#3a3a3a" stroke-width="0.8"/>
<rect x="588.4" y="261" width="5.8" height="5.4" rx="0.6" fill="#f4f4f4" stroke="#2e2e2e" stroke-width="0.9"/>
<rect x="588" y="260.6" width="6.6" height="1.6" fill="#2e2e2e"/>
</svg>
<svg width="600" height="458" viewBox="0 0 600 458">
<g transform="translate(4.8,20.7) scale(1.0,1.0)"><path d="M0.6 0H9.6L11.3 1.6V10.7Q11.3 11.3 10.7 11.3H0.6Q0 11.3 0 10.7V0.6Q0 0 0.6 0Z" fill="#1f3249"/><rect x="2" y="1.3" width="7.2" height="4.4" fill="#f4f4f4"/><rect x="2.8" y="7.6" width="5.6" height="3.7" fill="#f4f4f4"/><rect x="3.6" y="8.2" width="1.6" height="2.6" fill="#1f3249"/></g>
<path d="M22.4 26L28.2 21.6V24.3C32.5 24.3 35 27 35 31.3C33.6 29 31.6 27.9 28.2 27.9V30.6Z" fill="#1f3249"/>
<path d="M53.2 26L47.4 21.6V24.3C43.1 24.3 40.6 27 40.6 31.3C42 29 44 27.9 47.4 27.9V30.6Z" fill="#6b6b6b"/>
<path d="M60.2 21L66 27" stroke="#1f2d3d" stroke-width="1.3" stroke-linecap="round"/>
<path d="M66.4 27.4L70.5 31.5" stroke="#e8541c" stroke-width="2.6" stroke-linecap="round"/>
<path d="M65.8 26.2L61 31" stroke="#2a7fd4" stroke-width="2.6" stroke-linecap="round"/>
<path d="M65.2 26.8L68 24" stroke="#1f3249" stroke-width="2.2"/>
<path d="M67.2 20.4C65.8 21.6 65.8 23.4 67 24.8C68.3 26.1 70.3 26.1 71.6 24.8L69.6 24.4L68.3 22.6Z" fill="#1f3249"/>
<path d="M67.5 20.3L69.2 22.3L71.3 22.5L71.9 24.4C72.4 22.6 71.8 21.3 70.8 20.6C69.8 19.9 68.5 19.8 67.5 20.3Z" fill="#1f3249"/>
<rect x="79.8" y="20.2" width="12.6" height="12.2" fill="#d6d6d6" stroke="#8c8c8c" stroke-width="0.9"/>
<rect x="98" y="20.2" width="12.6" height="12.2" fill="#d6d6d6" stroke="#8c8c8c" stroke-width="0.9"/>
<rect x="116.4" y="20.2" width="12.6" height="12.2" fill="#d6d6d6" stroke="#8c8c8c" stroke-width="0.9"/>
<rect x="134.8" y="20.2" width="12.6" height="12.2" fill="#d6d6d6" stroke="#8c8c8c" stroke-width="0.9"/>
<rect x="153.2" y="20.2" width="12.6" height="12.2" fill="#d6d6d6" stroke="#8c8c8c" stroke-width="0.9"/>
<rect x="171.8" y="20.2" width="12.6" height="12.2" fill="#d6d6d6" stroke="#8c8c8c" stroke-width="0.9"/>
<g stroke="#7a7a7a" stroke-width="0.7" fill="#f2f2f2"><ellipse cx="83.8" cy="23.6" rx="2.4" ry="1.4"/><ellipse cx="83.8" cy="29.3" rx="2.4" ry="1.4"/><ellipse cx="89.0" cy="26.4" rx="1.6" ry="1.3"/><path d="M86.2 23.6H90.3V25.2M86.2 29.3H90.3V27.6" fill="none"/></g>
<g stroke="#7a7a7a" stroke-width="0.7" fill="#f2f2f2"><rect x="100" y="21.8" width="8.6" height="2.2"/><rect x="101.2" y="25.2" width="6.2" height="3"/><path d="M100.4 24V31M108.2 24V31M100.4 30H108.2M102.4 24V25.2M106.2 24V25.2" fill="none"/></g>
<g stroke="#7a7a7a" stroke-width="0.7" fill="#f2f2f2"><ellipse cx="121.0" cy="23.8" rx="3" ry="1.7"/><ellipse cx="124.80000000000001" cy="29" rx="2.6" ry="1.6"/><path d="M119.9 25.4L122.4 28.4M126.0 21V27.2" fill="none"/></g>
<g stroke="#7a7a7a" stroke-width="0.7" fill="#f2f2f2"><rect x="136.4" y="21.6" width="3.6" height="2.6"/><rect x="141.8" y="23.6" width="4.2" height="3.2"/><rect x="136.4" y="26.8" width="3.6" height="4"/><path d="M140.60000000000002 20.4V32.2M134.8 25.6H140.60000000000002M140.60000000000002 28.4H147.20000000000002" fill="none"/></g>
<g stroke="#707070" stroke-width="0.8" fill="none"><circle cx="159.5" cy="23.2" r="1.5" fill="#f2f2f2"/><path d="M159.5 24.7V28.6M156.39999999999998 25.2L159.5 26.2L162.6 25.2M159.5 28.6L157.39999999999998 31.4M159.5 28.6L161.6 31.4"/></g>
<g stroke="#7a7a7a" stroke-width="0.7" fill="#f2f2f2"><rect x="173.60000000000002" y="22" width="3.6" height="3.6"/><circle cx="181.0" cy="29" r="1.5"/><rect x="174.8" y="28.2" width="3" height="2.2"/><path d="M175.4 25.6V28.2M177.8 29.3H179.5M177.20000000000002 23.4H180.4" fill="none"/></g>
<rect x="179.8" y="21" width="3.8" height="3.8" fill="#e6dc8a" stroke="#b9b070" stroke-width="0.5"/>
<rect x="189.6" y="20.4" width="12.8" height="12" fill="#dfe9f6"/>
<g stroke="#6a78a8" stroke-width="0.8" fill="none"><path d="M190.0 20.4V32.4M193.79999999999998 20.4V32.4M197.79999999999998 20.4V32.4M202.0 24.6V32.4"/></g>
<g stroke="#b9c6e0" stroke-width="0.7" fill="none"><path d="M189.6 24H202.4M189.6 27H202.4M189.6 30H202.4"/></g>
<rect x="189.6" y="20.4" width="8.4" height="1.6" fill="#5560a0" opacity="0.75"/>
<rect x="198.0" y="20.2" width="4.4" height="4.6" fill="#f4c21c"/>
<path d="M263.9 24.8H269.5L266.7 27.6Z" fill="#7b7b7b"/>
<circle cx="284.8" cy="25.5" r="4.7" fill="none" stroke="#1c2b3e" stroke-width="1.6"/>
<path d="M288.2 29L291.3 32.1" stroke="#1c2b3e" stroke-width="2" stroke-linecap="round"/>
<rect x="300.2" y="23" width="12.8" height="9" rx="0.8" fill="#2e80e6"/>
<rect x="299.8" y="22.4" width="13.6" height="1.8" fill="#2a6fd0"/>
<rect x="303.4" y="20.9" width="5.6" height="1.7" rx="0.5" fill="#f0951c"/>
<g fill="#7db9ff"><circle cx="303.5" cy="26.5" r="0.45"/><circle cx="306.5" cy="28.5" r="0.45"/><circle cx="309.5" cy="26.5" r="0.45"/><circle cx="304.5" cy="30" r="0.45"/><circle cx="310" cy="30" r="0.45"/></g>
<rect x="316.3" y="18.2" width="16.8" height="16.2" rx="1.6" fill="#d8d8d8" stroke="#c4c4c4" stroke-width="0.8"/>
<g transform="translate(318.3,20.6) scale(1.0)"><path d="M0.3 1.2Q0.3 0.3 1.3 0.3H3.6Q4.4 0.3 4.4 1.2V1.6H0.3Z" fill="#f0a020"/><rect x="0.3" y="1.5" width="4.3" height="1.7" fill="#2f7fe0"/><path d="M1.6 3.2V9.9M1.6 6H3.6M1.6 9.9H3.6" stroke="#3a78c8" stroke-width="0.7" fill="none"/><rect x="3.7" y="4.6" width="3" height="2.7" fill="#f6d060" stroke="#d89a20" stroke-width="0.6"/><rect x="3.7" y="8.5" width="3" height="2.7" fill="#f6d060" stroke="#d89a20" stroke-width="0.6"/><path d="M7.8 5.9H12.4M7.8 9.9H12.4" stroke="#3a88e0" stroke-width="0.9"/></g>
<g fill="none" stroke="#1f3249" stroke-width="1.6" stroke-linecap="round"><path d="M345.4 25.4C344.8 23.9 343.8 23.6 342.8 23.6H340.4A2.75 2.75 0 0 0 340.4 29.1H341.2"/><path d="M340.8 27.3C341.4 28.8 342.4 29.1 343.4 29.1H345.8A2.75 2.75 0 0 0 345.8 23.6H345"/></g>
<rect x="355.6" y="20.3" width="11.8" height="12" rx="1.2" fill="#e2edfb" stroke="#8d9bb0" stroke-width="0.9"/>
<g fill="#8fb4e8"><circle cx="357.8" cy="22.6" r="0.42"/><circle cx="357.8" cy="25.1" r="0.42"/><circle cx="357.8" cy="27.6" r="0.42"/><circle cx="357.8" cy="30.1" r="0.42"/><circle cx="360.3" cy="22.6" r="0.42"/><circle cx="360.3" cy="25.1" r="0.42"/><circle cx="360.3" cy="27.6" r="0.42"/><circle cx="360.3" cy="30.1" r="0.42"/><circle cx="362.8" cy="22.6" r="0.42"/><circle cx="362.8" cy="25.1" r="0.42"/><circle cx="362.8" cy="27.6" r="0.42"/><circle cx="362.8" cy="30.1" r="0.42"/><circle cx="365.3" cy="22.6" r="0.42"/><circle cx="365.3" cy="25.1" r="0.42"/><circle cx="365.3" cy="27.6" r="0.42"/><circle cx="365.3" cy="30.1" r="0.42"/></g>
<path d="M372.6 20.8Q372.6 20 373.5 20H375.6Q376.4 20 376.4 20.8V21.3H372.6Z" fill="#f0a020"/>
<rect x="372.6" y="21.2" width="4.6" height="1.9" fill="#2f7fe0"/>
<rect x="374.2" y="25.2" width="3.6" height="2.9" fill="#f6d060" stroke="#e09a20" stroke-width="0.7"/>
<rect x="374.2" y="29.4" width="3.6" height="2.9" fill="#f6d060" stroke="#e09a20" stroke-width="0.7"/>
<rect x="379.6" y="25.4" width="7.2" height="7" fill="#d2d2d2" stroke="#9a9a9a" stroke-width="0.8"/>
<path d="M381.2 31L385.4 27" stroke="#efefef" stroke-width="0.9"/><path d="M381.6 27.4H383.6V29.4" stroke="#bdbdbd" stroke-width="0.6" fill="none"/>
<rect x="392.4" y="20.2" width="11.8" height="12.2" fill="#f0f0f0" stroke="#7d7d86" stroke-width="0.9"/>
<rect x="392" y="19.8" width="12.6" height="2" fill="#6a3fb0"/>
<path d="M394.6 21.8V32.4M402 21.8V32.4M392.4 30H404.2" stroke="#8a8a90" stroke-width="0.7" fill="none"/>
<rect x="396.4" y="24" width="3.8" height="3.8" rx="1" fill="#b8b8b8" stroke="#8a8a8a" stroke-width="0.6"/>
<g transform="translate(532,20) scale(1.0)"><path d="M0 2.6L7.6 4.2V12.6L0 10.4Z" fill="#f2c81e"/><path d="M0.2 2.6L6 0L12.4 1.6L9.4 4.2L7.6 4.4Z" fill="#c8201c"/><path d="M3.6 2.4L6.4 1.2L9.6 2L8 3.2Z" fill="#fdfdfd"/><path d="M7.6 4.4L9.8 3.8V10.2L13.8 8.2V9.8L7.6 12.6Z" fill="#2a1a9a"/><path d="M7.6 4.4L8.6 4.1V12.1L7.6 12.6Z" fill="#7a1a3a"/></g>
<path d="M587.4 25H593.2L590.3 27.9Z" fill="#2a2a2a"/>
</svg>
</div></body></html>
